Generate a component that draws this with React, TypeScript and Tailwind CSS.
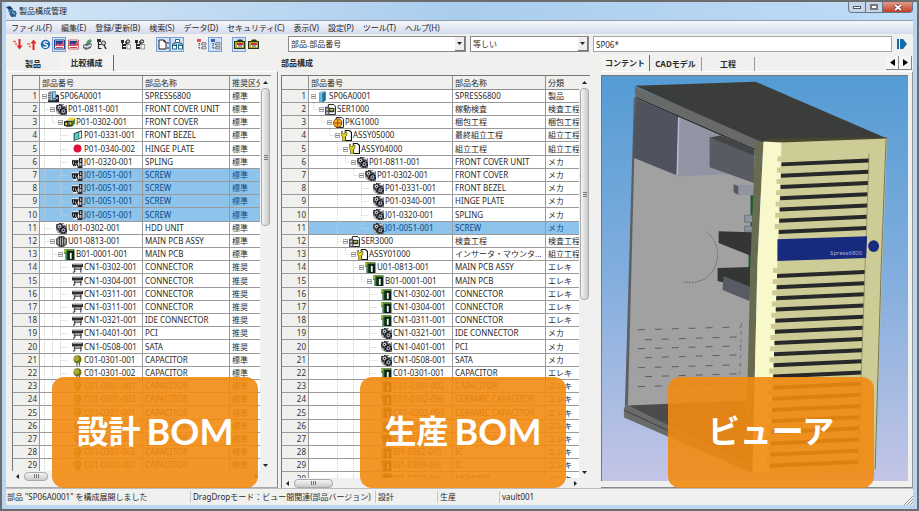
import { ReactNode } from "react";
import clsx from "clsx";

type IconName =
  | "server"
  | "gears"
  | "block"
  | "bezel"
  | "dot"
  | "screw"
  | "cluster"
  | "pcb"
  | "connector"
  | "capacitor"
  | "tower"
  | "series"
  | "package"
  | "assy";

interface BomRow {
  level: number;
  icon: IconName;
  code: string;
  name: string;
  kind: string;
  open?: boolean;
  selected?: boolean;
}

const row = (
  level: number,
  icon: IconName,
  code: string,
  name: string,
  kind: string,
  open = false,
  selected = false
): BomRow => ({ level, icon, code, name, kind, open, selected });

const designRows: BomRow[] = [
  row(0, "server", "SP06A0001", "SPRESS6800", "標準", true),
  row(1, "gears", "P01-0811-001", "FRONT COVER UNIT", "標準", true),
  row(2, "block", "P01-0302-001", "FRONT COVER", "標準", true),
  row(3, "bezel", "P01-0331-001", "FRONT BEZEL", "標準"),
  row(3, "dot", "P01-0340-002", "HINGE PLATE", "標準"),
  row(3, "screw", "J01-0320-001", "SPLING", "標準"),
  row(3, "screw", "J01-0051-001", "SCREW", "標準", false, true),
  row(3, "screw", "J01-0051-001", "SCREW", "標準", false, true),
  row(3, "screw", "J01-0051-001", "SCREW", "標準", false, true),
  row(3, "screw", "J01-0051-001", "SCREW", "標準", false, true),
  row(1, "gears", "U01-0302-001", "HDD UNIT", "標準"),
  row(1, "cluster", "U01-0813-001", "MAIN PCB ASSY", "標準", true),
  row(2, "pcb", "B01-0001-001", "MAIN PCB", "標準", true),
  row(3, "connector", "CN1-0302-001", "CONNECTOR", "推奨"),
  row(3, "connector", "CN1-0304-001", "CONNECTOR", "推奨"),
  row(3, "connector", "CN1-0311-001", "CONNECTOR", "推奨"),
  row(3, "connector", "CN1-0311-001", "CONNECTOR", "推奨"),
  row(3, "connector", "CN1-0321-001", "IDE CONNECTOR", "推奨"),
  row(3, "connector", "CN1-0401-001", "PCI", "推奨"),
  row(3, "connector", "CN1-0508-001", "SATA", "推奨"),
  row(3, "capacitor", "C01-0301-001", "CAPACITOR", "標準"),
  row(3, "capacitor", "C01-0301-002", "CAPACITOR", "標準"),
  row(3, "capacitor", "C01-0301-001", "CAPACITOR", "標準"),
  row(3, "capacitor", "C01-0301-002", "CAPACITOR", "標準"),
  row(3, "capacitor", "C01-0301-001", "CAPACITOR", "標準"),
  row(3, "capacitor", "C01-0301-002", "CAPACITOR", "標準"),
  row(3, "capacitor", "C01-0301-001", "CAPACITOR", "標準"),
  row(3, "capacitor", "C01-0301-002", "CAPACITOR", "標準"),
  row(3, "capacitor", "C01-0301-001", "CAPACITOR", "標準"),
];

const productionRows: BomRow[] = [
  row(0, "tower", "SP06A0001", "SPRESS6800", "製品", true),
  row(1, "series", "SER1000", "稼動検査", "検査工程", true),
  row(2, "package", "PKG1000", "梱包工程", "梱包工程", true),
  row(3, "assy", "ASSY05000", "最終組立工程", "組立工程", true),
  row(4, "assy", "ASSY04000", "組立工程", "組立工程", true),
  row(5, "gears", "P01-0811-001", "FRONT COVER UNIT", "メカ", true),
  row(6, "gears", "P01-0302-001", "FRONT COVER", "メカ", true),
  row(7, "gears", "P01-0331-001", "FRONT BEZEL", "メカ"),
  row(7, "gears", "P01-0340-001", "HINGE PLATE", "メカ"),
  row(7, "gears", "J01-0320-001", "SPLING", "メカ"),
  row(7, "gears", "J01-0051-001", "SCREW", "メカ", false, true),
  row(4, "series", "SER3000", "検査工程", "検査工程", true),
  row(5, "assy", "ASSY01000", "インサータ・マウンタ...", "組立工程", true),
  row(6, "pcb", "U01-0813-001", "MAIN PCB ASSY", "エレキ", true),
  row(7, "pcb", "B01-0001-001", "MAIN PCB", "エレキ", true),
  row(8, "pcb", "CN1-0302-001", "CONNECTOR", "エレキ"),
  row(8, "pcb", "CN1-0304-001", "CONNECTOR", "エレキ"),
  row(8, "pcb", "CN1-0311-001", "CONNECTOR", "エレキ"),
  row(8, "gears", "CN1-0321-001", "IDE CONNECTOR", "メカ"),
  row(8, "gears", "CN1-0401-001", "PCI", "メカ"),
  row(8, "gears", "CN1-0508-001", "SATA", "メカ"),
  row(8, "pcb", "C01-0301-001", "CAPACITOR", "エレキ"),
  row(8, "pcb", "C01-0301-002", "CAPACITOR", "エレキ"),
  row(8, "pcb", "C01-0302-096", "CERAMIC CAPACITOR", "エレキ"),
  row(8, "pcb", "C01-0302-097", "CERAMIC CAPACITOR", "エレキ"),
  row(8, "pcb", "C01-0303-001", "CAPACITOR", "エレキ"),
  row(8, "pcb", "C01-0303-002", "CAPACITOR", "エレキ"),
  row(8, "pcb", "I01-0302-001", "IC", "エレキ"),
  row(8, "pcb", "I01-0309-001", "IC", "エレキ"),
  row(8, "pcb", "I01-0303-001", "MEMORY", "エレキ"),
];

const partIcons: Record<IconName, ReactNode> = {
  server: (
    <>
      <path d="M0 1.500 3 0v8.500H0z" fill="#6b7075" />
      <path d="M0 3h3M0 5h3M0 7h3" stroke="#c9ccd0" strokeWidth=".7" />
      <path d="M3.500.5 7 0v8H3.500z" fill="#2b6c9d" />
      <path d="M4.500 1h2v5.500h-2z" fill="#9fd0ee" />
      <path d="M0 8.500h10V10H0zM8 3l2 1v5H7V5z" fill="#1c2024" />
      <path d="M7.500 5.500h1.500v2H7.500z" fill="#b8bcc0" />
    </>
  ),
  gears: (
    <>
      <path d="M4 0h3l.5 2L10 1v9H4L3 9l-2-.5L0 6V1h3z" fill="#7e8185" />
      <circle cx="3.200" cy="3.200" r="2.500" fill="none" stroke="#1b1c1f" strokeWidth="1.300" strokeDasharray="1.500 .7" />
      <circle cx="3.200" cy="3.200" r="1.300" fill="#dfe2e6" />
      <circle cx="3.200" cy="3.200" r=".6" fill="#111" />
      <circle cx="6.700" cy="6.600" r="2.600" fill="none" stroke="#121316" strokeWidth="1.500" strokeDasharray="1.600 .6" />
      <circle cx="6.700" cy="6.600" r="1.500" fill="#9ea9d6" />
      <circle cx="6.700" cy="6.600" r=".7" fill="#111" />
      <path d="M6 1.500h1.500M8.500 2v2M.8 7l1.700 1" stroke="#f5f5f5" strokeWidth=".9" />
      <path d="M7 3h2M3 6.500v2" stroke="#222" strokeWidth=".9" />
    </>
  ),
  block: (
    <>
      <path d="M0 4 4 3v6L0 8z" fill="#111" />
      <path d="M1 5h2v2.500H1z" fill="#e7ce2c" />
      <path d="M3 3 5 .5h5L8 3.500z" fill="#f4dc35" />
      <path d="M4 3.500h4v5l-4 .5z" fill="#163a20" />
      <path d="M8 3.500 10 .8V6L8 8.500z" fill="#3d8d47" />
      <path d="M5 4.500h1.800v2.500H5z" fill="#d5c02c" />
    </>
  ),
  bezel: (
    <>
      <path d="M1.500 3 9 .3v7L1.500 10z" fill="#16303a" />
      <path d="M2.300 3.500 6 2.200V8L2.300 9.200z" fill="#56cfca" />
      <path d="M6.500 2 8.300 1.300v5.500L6.500 7.500z" fill="#d9f6f2" />
    </>
  ),
  dot: <circle cx="5" cy="5" r="3.600" fill="#e00f3c" />,
  screw: (
    <>
      <path d="M0 2h9.500v7.500H1z" fill="#eee" />
      <path
        d="M.5 6V3.500h1.800v3l1 1.500M2.800 6V3.500h1.500v3l1 1.500M4.800 6V3.500h1.200M.5 6l1.500 2"
        fill="none"
        stroke="#101113"
        strokeWidth="1.100"
      />
      <path d="M6.300 1h3.200v9H5V8.500h1.300z" fill="#26282b" />
      <path d="M7.300 2h1v2.500h-1zM6.800 5.500h1.700V8H6.800z" fill="#c3c6cb" />
    </>
  ),
  cluster: (
    <>
      <path d="M3 0h4l3 2.500v5L7 10H3L0 7.500v-5z" fill="#5a5b5d" />
      <path d="M3 1v8M5 0v10M7 1v8M1 3.500h8M1 6.500h8" stroke="#2b2b2c" strokeWidth=".6" />
      <path d="M1.500 2.500h1v5h-1zM3.700 2h.8v6h-.8zM5.600 2h.8v6h-.8zM7.600 2.500h1v5h-1z" fill="#c3c4c5" />
    </>
  ),
  pcb: (
    <>
      <path d="M0 .5h9.500V10H1.500V4H0z" fill="#0b2412" />
      <path d="M0 .5h9v1.200H0z" fill="#5d8f2d" />
      <path d="M0 .5h2v3H0z" fill="#b2c440" />
      <path d="M1.500 2h1.500v8H1.500z" fill="#2f9140" />
      <path d="M5.300 3.500H7V9H5.300z" fill="#eef1ec" />
    </>
  ),
  connector: (
    <>
      <path d="M.5 1.500H10v3L9 5H0V3z" fill="#2c2e31" />
      <path d="M1 2.300h8" stroke="#a2a5a9" strokeWidth=".8" />
      <path d="M2.500 5v3.500L1 9.500M8 5v4.500M1.500 6.500H9" stroke="#45474b" strokeWidth="1.100" fill="none" />
    </>
  ),
  capacitor: (
    <>
      <path d="M4.500 6v4M6.800 6v3.500" stroke="#55584a" />
      <circle cx="5" cy="3.800" r="3.600" fill="#6f7420" />
      <circle cx="4.200" cy="3.200" r="2.400" fill="#a9ab30" />
    </>
  ),
  tower: (
    <>
      <path d="M2 1.500 4 .5h4v8L6 10H2z" fill="#1f6f98" />
      <path d="M2 1.500h3V10H2z" fill="#6bb7d6" />
      <path d="M2 1.500 4 .5h4l-3 1z" fill="#b3e0f0" />
    </>
  ),
  series: (
    <>
      <path d="M3 .5h5L9.500 2v7.500H3z" fill="#fff" stroke="#222" strokeWidth=".9" />
      <path d="M0 2.500h4V10H0z" fill="#4d515b" />
      <path d="M1 4h2v2H1zM1 7h2v2H1z" fill="#b9c0d4" />
      <path d="M3.500 3.500h5v4h-5z" fill="#2b2f38" />
      <path d="M4.500 4.500h3v1.500h-3z" fill="#e0ca32" />
    </>
  ),
  package: (
    <>
      <path d="M3 .5h5L9.500 2v7.500H3z" fill="#fff" stroke="#222" strokeWidth=".9" />
      <circle cx="4.300" cy="5.500" r="4.200" fill="#7a3212" />
      <circle cx="4.300" cy="5.500" r="3.400" fill="#f2b41f" />
      <path d="M4.300 2.500v6M1 5.500h6.500" stroke="#b53a12" strokeWidth=".9" />
    </>
  ),
  assy: (
    <>
      <path d="M4 .5h3.500L9.500 2v7.500H4z" fill="#fff" stroke="#111" />
      <path
        d="M0 2 1.200.8v2l1.300.7 1.300-.7V.8L5.300 2v3L4 6v4H1.500V6L0 5z"
        fill="#e3d620"
        stroke="#45400a"
        strokeWidth=".6"
      />
    </>
  ),
};

const STEP = 8;

// A guide stays alive below a level while that level still has siblings to come.
function continues(levels: number[], from: number, level: number) {
  for (let i = from + 1; i < levels.length; i++) {
    if (levels[i] < level) return false;
    if (levels[i] === level) return true;
  }
  return false;
}

function TreeLines({ levels, index, open }: { levels: number[]; index: number; open?: boolean }) {
  const level = levels[index];
  const width = level * STEP + 8;
  const x = (l: number) => l * STEP + 4.5;

  return (
    <svg width={width} height="12" className="shrink-0" aria-hidden="true">
      <g stroke="#cfcfca" strokeDasharray="1 1" fill="none">
        {Array.from({ length: level }, (_, l) => {
          const more = continues(levels, index, l + 1);
          if (l === level - 1) {
            return <path key={l} d={`M${x(l)} 0V${more ? 12 : 6}M${x(l)} 6.5H${x(l + 1)}`} />;
          }
          return more ? <path key={l} d={`M${x(l)} 0V12`} /> : null;
        })}
      </g>
      {open && (
        <g transform={`translate(${level * STEP + 2} 4)`}>
          <rect x=".5" y=".5" width="4" height="4" fill="#fff" stroke="#aaa" />
          <path d="M1 2.500h3" stroke="#777" />
        </g>
      )}
    </svg>
  );
}

interface BomTableProps {
  label: string;
  rows: BomRow[];
  tail: number[];
  kindTitle: string;
  codeWidth: string;
  nameWidth: string;
}

function BomTable({ label, rows, tail, kindTitle, codeWidth, nameWidth }: BomTableProps) {
  const levels = [...rows.map((r) => r.level), ...tail];
  const head =
    "h-[14px] border-r border-b border-[#8f8f8f] bg-[#f0f0ee] px-[2px] text-left font-normal overflow-hidden";
  const cell = "border-r border-b border-[#9a9a9a] overflow-hidden";

  return (
    <table
      aria-label={label}
      className="w-full table-fixed border-separate border-spacing-0 whitespace-nowrap leading-[12px]"
    >
      <colgroup>
        <col className="w-[27px]" />
        <col className={codeWidth} />
        <col className={nameWidth} />
        <col />
      </colgroup>
      <thead>
        <tr>
          <th className={head} />
          <th className={head}>部品番号</th>
          <th className={head}>部品名称</th>
          <th className={clsx(head, "border-r-0 pr-0")}>{kindTitle}</th>
        </tr>
      </thead>
      <tbody>
        {rows.map((r, i) => (
          <tr
            key={i}
            className={clsx(
              "h-[13px] nth-[5n]:h-[14px]",
              r.selected ? "bg-[#8ec3eb] text-[#0b4a86]" : "bg-white"
            )}
          >
            <td className={clsx(cell, "bg-[#f0f0ee] pr-[2px] text-right text-[#333]")}>{i + 1}</td>
            <td className={cell}>
              <div className="flex h-[12px] items-center">
                <TreeLines levels={levels} index={i} open={r.open} />
                <svg width="11" height="11" viewBox="0 0 10 10" className="shrink-0" aria-hidden="true">
                  {partIcons[r.icon]}
                </svg>
                <span className="pl-px">{r.code}</span>
              </div>
            </td>
            <td className={clsx(cell, "pl-[2px]")}>{r.name}</td>
            <td className={clsx(cell, "border-r-0 pl-[2px]")}>{r.kind}</td>
          </tr>
        ))}
      </tbody>
    </table>
  );
}

function Arrow({ d }: { d: string }) {
  return (
    <svg width="5" height="5" viewBox="0 0 5 5" className="shrink-0" aria-hidden="true">
      <path d={d} fill="#222" />
    </svg>
  );
}

function VScroll({ thumb }: { thumb: string }) {
  return (
    <div className="flex w-[11px] shrink-0 flex-col items-center bg-[#f0f0f0]">
      <div className="flex h-[12px] items-center">
        <Arrow d="M0 4h5L2.500 1z" />
      </div>
      <div
        className={clsx(
          "flex w-[9px] flex-col items-center justify-center gap-px rounded-sm border border-[#aaa] bg-linear-to-r from-[#f5f5f5] to-[#c9c9cb]",
          thumb
        )}
      >
        <i className="h-px w-[4px] bg-[#777]" />
        <i className="h-px w-[4px] bg-[#777]" />
        <i className="h-px w-[4px] bg-[#777]" />
      </div>
      <div className="mt-auto flex h-[12px] items-center">
        <Arrow d="M0 1h5L2.500 4z" />
      </div>
    </div>
  );
}

function HScroll({ thumb }: { thumb: string }) {
  return (
    <div className="flex h-[10px] shrink-0 items-center bg-[#f0f0f0] pr-3 pl-[3px]">
      <Arrow d="M4 0v5L1 2.500z" />
      <div
        className={clsx(
          "ml-1 flex h-[9px] items-center justify-center gap-px rounded-sm border border-[#aaa] bg-linear-to-b from-[#f5f5f5] to-[#c9c9cb]",
          thumb
        )}
      >
        <i className="h-[4px] w-px bg-[#777]" />
        <i className="h-[4px] w-px bg-[#777]" />
        <i className="h-[4px] w-px bg-[#777]" />
      </div>
      <div className="ml-auto flex">
        <Arrow d="M1 0v5L4 2.500z" />
      </div>
    </div>
  );
}

function Caption({ children, className }: { children: ReactNode; className: string }) {
  return (
    <div
      className={clsx(
        "absolute bottom-0 flex h-[111px] w-[206px] items-center justify-center rounded-[12px] bg-[#f28a10]/90 pb-[4px] font-['Lato','Noto_Sans_CJK_JP',sans-serif] text-[32px] leading-none font-bold text-white",
        className
      )}
    >
      {children}
    </div>
  );
}

interface ToolProps {
  label: string;
  pressed?: boolean;
  gap?: boolean;
  children: ReactNode;
}

function Tool({ label, pressed, gap, children }: ToolProps) {
  return (
    <button
      type="button"
      aria-label={label}
      aria-pressed={pressed}
      className={clsx(
        "flex h-[15px] w-[14px] shrink-0 items-center justify-center",
        pressed && "border border-[#7b9fd8] bg-[#cfe0f7]",
        gap && "ml-[10px]"
      )}
    >
      <svg width="11" height="11" viewBox="0 0 11 11" fill="none" className="shrink-0" aria-hidden="true">
        {children}
      </svg>
    </button>
  );
}

function monitor(frame: string) {
  return (
    <>
      <path d="M.5 1h10v9H.5z" fill="#eef2fb" stroke={frame} />
      <path d="M1.500 2h8v5h-8z" fill="#1d3f94" />
      <path d="m1.500 7 2.500-3 2 2 3.500-4v5z" fill="#e2505e" />
      <path d="M2 8.500h7" stroke="#c8404e" />
    </>
  );
}

const findParts = (
  <>
    <path d="M1 1h3v3H1zM2 4h1v6H2zM3 5h3v2H3zM3 8h3v2H3z" fill="#26292b" />
    <path d="M5 2h2v2H5z" fill="#2f8a4b" />
    <path d="M7 5.500h3.500v4.500H7z" fill="#f3f3f3" stroke="#777" strokeWidth=".7" />
    <circle cx="8" cy="2.500" r="1.700" fill="#ccd" stroke="#222" />
    <path d="m7 4-2 2" stroke="#222" strokeWidth="1.300" />
  </>
);

const folder = (
  <>
    <path d="M0 2h3l1-1.500h4L9 2h2v8H0z" fill="#22390f" />
    <path d="M1 3h9v6H1z" fill="#bda52a" />
    <path d="M3 4h6v4H3z" fill="#e9edf0" />
    <path d="M3 4h6v2H3z" fill="#c92a35" />
    <path d="M4 7h4" stroke="#1b5c93" />
  </>
);

function treeNodes(top: string) {
  return (
    <>
      <path d="M3 2v7M3 5h3M3 9h3" stroke="#333" strokeDasharray="1 1" />
      <path d="M1 0h4v3H1z" fill={top} />
      <path d="M6 3.500h4V6H6zM6 7.500h4V10H6z" fill="#c6ccd4" stroke="#59616b" strokeWidth=".6" />
    </>
  );
}

function Toolbar() {
  return (
    <div className="flex h-full w-[280px] shrink-0 items-center pt-px pl-[2px]">
      <Tool label="展開">
        <path d="M1 2.500h3M3 5h2" stroke="#f06b45" strokeWidth="1.500" />
        <path d="M6.500 0h2v6.500h2L7.500 10.500 4.500 6.500h2z" fill="#e3222b" />
      </Tool>
      <Tool label="逆展開">
        <path d="M1 5h3M3 7.500h2" stroke="#f06b45" strokeWidth="1.500" />
        <path d="M6.500 11h2V4.500h2L7.500.5l-3 4h2z" fill="#e3222b" />
      </Tool>
      <Tool label="同期">
        <circle cx="5.500" cy="5.500" r="4.700" fill="#1b6bb2" />
        <path d="M7.800 3.500C6 2.200 3.500 3 4 4.700c1 1.300 3.500.3 3.500 2S5 9 3.300 7.500" stroke="#fff" strokeWidth="1.300" />
      </Tool>
      <Tool label="比較表示" pressed>{monitor("#24427f")}</Tool>
      <Tool label="差分表示">{monitor("#c26a78")}</Tool>
      <Tool label="印刷">
        <path d="M1 6 7 3l3 2-1 4-5 2-3-2z" fill="#5e6f7b" />
        <path d="m4 3 4-3 2 2-3 3z" fill="#4f9560" />
        <path d="m2 7 3 1 4-2" stroke="#e4e9ed" strokeWidth="1.500" />
      </Tool>
      <Tool label="構成検索">
        <path d="M1 0h4v3H1z" fill="#333" />
        <path d="M2.500 3v7M2.500 5.500h3M2.500 9.500h3" stroke="#222" strokeWidth="1.200" />
        <circle cx="7.500" cy="4" r="2" stroke="#333" fill="#ddd" />
        <path d="m8 6 2 4" stroke="#333" strokeWidth="1.500" />
      </Tool>
      <Tool label="部品検索" gap>{findParts}</Tool>
      <Tool label="部品置換">{findParts}</Tool>
      <Tool label="新規" gap pressed>
        <path d="M1 1h5l2 2v7H1z" fill="#fff" stroke="#222" />
        <path d="M6 1v2h2" stroke="#222" />
        <path d="M10 3v2M10 8v2" stroke="#222" />
      </Tool>
      <Tool label="関連表示" pressed>
        <path d="M3.500.5h4v3h-4zM.5 5h4v5h-4zM6.500 5h4v5h-4z" fill="#fff" stroke="#1f6a86" />
        <path d="M.5 6.500h4M6.500 6.500h4" stroke="#1f6a86" />
        <path d="M2 3.500V5M9 3.500V5" stroke="#333" />
      </Tool>
      <Tool label="ツリー" gap>{treeNodes("#e0525c")}</Tool>
      <Tool label="ツリー連動" pressed>{treeNodes("#3b5fb0")}</Tool>
      <Tool label="フォルダ" gap pressed>{folder}</Tool>
      <Tool label="フォルダ追加">{folder}</Tool>
    </div>
  );
}

function Combo({ label, value, className }: { label: string; value: string; className: string }) {
  return (
    <div className={clsx("relative h-4 border border-[#8a8a8a] bg-white", className)}>
      <select aria-label={label} className="block h-full w-full appearance-none bg-white pr-3 pl-[2px] outline-none">
        <option>{value}</option>
      </select>
      <span className="pointer-events-none absolute inset-y-0 right-0 flex w-[10px] items-center justify-center border-r border-b border-[#777] bg-[#efeeec]">
        <Arrow d="M0 1h5L2.500 4z" />
      </span>
    </div>
  );
}

// Upper vents sit above the name plate, the rest run to the foot of the door.
const vents = [
  ...Array.from({ length: 7 }, (_, i) => 162 + i * 11.3),
  ...Array.from({ length: 18 }, (_, i) => 274 + i * 11.2),
];

const holeRows = [327, 337, 346, 355, 365, 374, 384];

function ServerModel() {
  return (
    <svg
      viewBox="601 76 307 405"
      preserveAspectRatio="xMidYMid meet"
      className="block h-full w-full"
      role="img"
      aria-label="SPRESS6800"
    >
      <path d="m635 97 120 50-5 318-126-58z" fill="#a1a1a1" />
      <path d="m633 97 2 0-8 309h-3z" fill="#5d6063" />
      <path d="m627 406 119-5-1 65z" fill="#4a4b4a" />
      <path d="m625 405 121 58 6 11-129-56v-9z" fill="#686b69" />
      <path d="m624 411 124 57" stroke="#3d3f3e" />

      <path d="m635 98 43 18-2 59-44-18z" fill="#4f535e" />
      <path d="m678 117 46 18 3 39-51 2z" fill="#9194a2" />
      <path d="m678 117-1.500 58" stroke="#b9b9d8" strokeWidth="1.500" />
      <path d="m709 137 45 16v30l-45-16z" fill="#585b62" />
      <path d="m709 137 11-2 34 14v6z" fill="#434445" />
      <path d="m733 184 5 2v9l-5-3z" fill="#55585f" />
      <path d="m735 184 18 1v10h-15v-9z" fill="#9194a2" />
      <path d="M750 195h3v35h-3zM748 255h3v13h-3z" fill="#1f5a2d" />
      <path d="M744 215h8v7h-8zM744 226h8v5h-8z" fill="#9194a2" stroke="#5a5d64" strokeWidth=".6" />
      <path d="m718 231 34 1-1 24-33-13z" fill="#343635" />
      <path d="m717 268 33-1v22l-33-8z" fill="#343635" />
      <path d="m723 276 27 11-1 14-27-11z" fill="#585b64" />
      <path d="M706 232q11 9 11 23c-1 18-13 30-34 27" fill="none" stroke="#6d6d6d" strokeDasharray="2 1" />

      {holeRows.map((y, i) => (
        <path
          key={y}
          d={`M${i % 2 ? 644 : 637} ${y + 3} 741 ${y}`}
          stroke="#5c5c5c"
          strokeDasharray="7 10"
        />
      ))}
      <path d="m741 323-2 60" stroke="#777" strokeDasharray="4 4" />

      <path d="m634 86 131 54-11 10-119-53-1-3z" fill="#676a68" />
      <path d="m635 97 119 52" stroke="#222" />
      <path d="m634 85 121-4 132 57-125 4z" fill="#3b3d3b" />
      <path d="m762 142 8-4 117-1v2l-107 4z" fill="#49472e" />

      <path d="m755 139 8 3-6 118-5 214-7-10 5-204z" fill="#696b50" />
      <path d="m763 141 19 1-12 332h-18l5-214z" fill="#f8f8cb" />
      <path d="m781 142 106-4-5 132-7 201-105 3z" fill="#cecc96" />
      <path d="m886 139-5 131-6 200" fill="none" stroke="#777653" />
      {vents.map((y) => {
        const left = 781 - (y - 162) * 0.039;
        const right = 869 - (y - 158) * 0.036;
        return (
          <g key={y}>
            <path d={`M${left - 4} ${y - 6}h6v5h-6z`} fill="#cecc96" />
            <path d={`M${left} ${y}L${right} ${y - 4}v4L${left} ${y + 4}z`} fill="#262829" />
          </g>
        );
      })}
      <path d="m869 153-11 310" stroke="#8a8862" strokeWidth=".8" />
      <path d="m777 239 90-3-1 22-89 3z" fill="#172a7d" />
      <text x="862" y="255" textAnchor="end" fontSize="6" fill="#a9aee0">
        Spress6800
      </text>
      <ellipse cx="873.500" cy="246" rx="5.500" ry="6" fill="#172a7d" />
    </svg>
  );
}

const menus = [
  "ファイル(F)",
  "編集(E)",
  "登録/更新(B)",
  "検索(S)",
  "データ(D)",
  "セキュリティ(C)",
  "表示(V)",
  "設定(P)",
  "ツール(T)",
  "ヘルプ(H)",
];

function Tab({ label, active, className }: { label: string; active?: boolean; className: string }) {
  return (
    <button
      type="button"
      role="tab"
      aria-selected={!!active}
      className={clsx(
        "border-r font-bold",
        active ? "h-[16px] border-[#666] bg-[#f3f3f1]" : "h-[14px] border-[#999]",
        className
      )}
    >
      {label}
    </button>
  );
}

function TitleBar() {
  const control = "flex h-[11px] items-center justify-center border border-t-0 border-[#66788c]";

  return (
    <header className="flex h-[18px] shrink-0 items-start justify-between bg-linear-to-r from-[#d4e5f6] via-[#aacdee] to-[#bfdcf5]">
      <div className="flex h-full items-center gap-[2px]">
        <svg width="11" height="11" viewBox="0 0 11 11" aria-hidden="true">
          <path d="m0 1 4-1 3 3-3 2z" fill="#163b6b" />
          <path d="m2 4 4-1 3 4-5 2z" fill="#3f7abf" />
          <circle cx="7.500" cy="7.500" r="3" fill="#2c5e8f" />
          <path d="m4 8 2 3h4" stroke="#173456" fill="none" />
          <path d="m6 6 3 2" stroke="#b7e2ea" />
        </svg>
        <h1>製品構成管理</h1>
      </div>
      <div className="flex">
        <button type="button" aria-label="最小化" className={clsx(control, "w-[18px] rounded-bl bg-[#c3d5e6]")}>
          <i className="h-[3px] w-[8px] border border-[#555] bg-white" />
        </button>
        <button type="button" aria-label="最大化" className={clsx(control, "w-[17px] border-l-0 bg-[#c3d5e6]")}>
          <i className="h-[6px] w-[8px] border-2 border-[#777] bg-white" />
        </button>
        <button
          type="button"
          aria-label="閉じる"
          className={clsx(control, "w-[30px] rounded-br border-l-0 bg-linear-to-b from-[#e09a8c] to-[#c23a22]")}
        >
          <svg width="8" height="7" viewBox="0 0 8 7" aria-hidden="true">
            <path d="m1 1 6 5m0-5L1 6" stroke="#5b3030" strokeWidth="3" />
            <path d="m1 1 6 5m0-5L1 6" stroke="#fff" strokeWidth="1.800" />
          </svg>
        </button>
      </div>
    </header>
  );
}

export default function App() {
  const status = "border-r border-[#c4c4c4] truncate";

  return (
    <div className="flex h-screen flex-col border-2 border-[#6c6c6c] bg-[#b9d5ef] font-['Noto_Sans','Noto_Sans_CJK_JP',sans-serif] text-[8px] leading-[12px] text-[#2a2a2a]">
      <div className="flex min-h-0 flex-1 flex-col px-[4px] pb-[4px]">
        <TitleBar />

        <nav className="flex h-[14px] shrink-0 items-center gap-[9px] border-t border-[#8d9db0] bg-linear-to-b from-[#f6f8fc] to-[#d3daec] pl-[5px] whitespace-nowrap">
          {menus.map((m) => (
            <button key={m} type="button">
              {m}
            </button>
          ))}
        </nav>

        <div className="flex h-[20px] shrink-0 items-center bg-[#f0f0ee] pl-[2px]">
          <Toolbar />
          <Combo label="検索項目" value="部品.部品番号" className="w-[178px] shrink-0" />
          <Combo label="条件" value="等しい" className="ml-1 w-[119px] shrink-0" />
          <input
            aria-label="検索値"
            defaultValue="SP06*"
            className="ml-1 h-4 min-w-0 flex-1 border border-[#a5a5a5] bg-white pl-[2px] outline-none"
          />
          <button type="button" aria-label="実行" className="mr-[6px] ml-[5px]">
            <svg width="10" height="10" viewBox="0 0 10 10" aria-hidden="true">
              <path d="M0 0h2v10H0zM3 0h3l4 5-4 5H3z" fill="#1668a8" />
            </svg>
          </button>
        </div>

        <main className="flex min-h-0 flex-1 bg-[#f0f0ee]">
          <section className="relative flex w-[272px] shrink-0 flex-col">
            <div role="tablist" className="flex h-[17px] shrink-0 items-end pl-px">
              <Tab label="製品" className="w-[53px] border-[#f0f0ee]" />
              <Tab label="比較構成" active className="w-[54px]" />
            </div>
            <div className="flex min-h-0 flex-1 flex-col border-t border-r border-b border-t-white border-r-[#888] border-b-[#aaa] pt-[3px] pr-[6px] pb-[6px] pl-[6px]">
              <div className="flex min-h-0 flex-1 border-t border-l border-[#777] bg-white">
                <div className="min-w-0 flex-1 overflow-hidden">
                  <BomTable
                    label="比較構成"
                    rows={designRows}
                    tail={[3, 2, 1]}
                    kindTitle="推奨区分"
                    codeWidth="w-[103px]"
                    nameWidth="w-[87px]"
                  />
                </div>
                <VScroll thumb="h-[138px]" />
              </div>
              <HScroll thumb="w-[24px]" />
            </div>
            <Caption className="left-[46px]">
              <span>設計</span>
              <span className="pl-[6px] text-[36px]">BOM</span>
            </Caption>
          </section>

          <section className="relative flex w-[323px] shrink-0 flex-col pr-[11px] pl-[3px]">
            <h2 className="flex h-[17px] shrink-0 items-center font-bold">部品構成</h2>
            <div className="mt-1 flex min-h-0 flex-1 flex-col border-t border-l border-[#777]">
              <div className="flex min-h-0 flex-1 bg-white">
                <div className="min-w-0 flex-1 overflow-hidden">
                  <BomTable
                    label="部品構成"
                    rows={productionRows}
                    tail={[8, 6, 4]}
                    kindTitle="分類"
                    codeWidth="w-[144px]"
                    nameWidth="w-[93px]"
                  />
                </div>
                <VScroll thumb="h-[212px]" />
              </div>
              <HScroll thumb="w-[39px]" />
            </div>
            <Caption className="left-[82px]">
              <span>生産</span>
              <span className="pl-[6px] text-[36px]">BOM</span>
            </Caption>
          </section>

          <section className="relative flex min-w-0 flex-1 flex-col">
            <div className="flex h-[17px] shrink-0 items-end">
              <div role="tablist" className="flex items-end">
                <Tab label="コンテント" active className="w-[49px]" />
                <Tab label="CADモデル" className="w-[52px]" />
                <Tab label="工程" className="w-[53px]" />
              </div>
              <div className="mr-px mb-px ml-auto flex">
                <button
                  type="button"
                  aria-label="前のタブ"
                  className="flex h-[14px] w-[13px] items-center justify-center border-r border-b border-[#888] bg-[#f5f5f3]"
                >
                  <svg width="5" height="7" viewBox="0 0 5 7" aria-hidden="true">
                    <path d="M5 0v7L0 3.500z" />
                  </svg>
                </button>
                <button
                  type="button"
                  aria-label="次のタブ"
                  className="flex h-[14px] w-[13px] items-center justify-center border-r border-b border-[#888] bg-[#f5f5f3]"
                >
                  <svg width="5" height="7" viewBox="0 0 5 7" aria-hidden="true">
                    <path d="M0 0v7l5-3.500z" />
                  </svg>
                </button>
              </div>
            </div>
            <div className="flex min-h-0 flex-1 flex-col border-t border-r border-b border-t-white border-r-[#999] border-b-[#888] pt-[3px] pr-[4px] pb-[6px]">
              <div className="min-h-0 flex-1 border-t border-l border-[#777] bg-linear-to-b from-[#549bd5] via-[#82aedd] to-[#c3c5e6]">
                <ServerModel />
              </div>
            </div>
            <Caption className="left-[67px]">ビューア</Caption>
          </section>
        </main>

        <footer className="flex h-[17px] shrink-0 items-center gap-[2px] border-t border-[#bbb] bg-[#f0f0ee] pl-px whitespace-nowrap">
          <span className={clsx(status, "w-[184px] shrink-0")}>部品 "SP06A0001" を構成展開しました</span>
          <span className={clsx(status, "w-[183px] shrink-0")}>DragDropモード：ビュー間関連(部品バージョン)</span>
          <span className={clsx(status, "w-[60px] shrink-0")}>設計</span>
          <span className={clsx(status, "w-[60px] shrink-0")}>生産</span>
          <span className="flex-1">vault001</span>
          <svg width="9" height="9" viewBox="0 0 9 9" className="self-end" aria-hidden="true">
            <path d="m0 9 9-9M3 9l6-6M6 9l3-3" stroke="#999" />
          </svg>
        </footer>
      </div>
    </div>
  );
}
